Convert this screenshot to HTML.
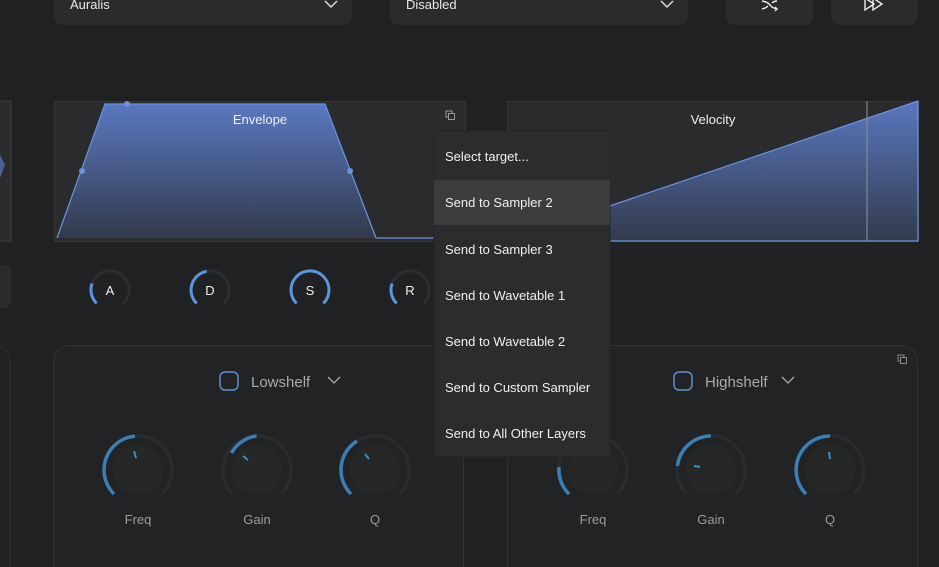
<!DOCTYPE html>
<html><head><meta charset="utf-8"><style>
html,body{margin:0;padding:0;background:#1f2122;width:939px;height:567px;overflow:hidden;font-family:"Liberation Sans",sans-serif}
svg text{font-family:"Liberation Sans",sans-serif}
</style></head><body>
<svg width="939" height="567" viewBox="0 0 939 567" xmlns="http://www.w3.org/2000/svg">
<defs>
<linearGradient id="g" x1="0" y1="0" x2="0" y2="1">
<stop offset="0" stop-color="#5a78c0"/><stop offset="1" stop-color="#323a4c"/></linearGradient>
</defs>
<rect width="939" height="567" fill="#1f2122"/>
<rect x="54" y="-12" width="298" height="37" rx="9" fill="#2a2b2c"/>
<text x="70" y="9" fill="#e8e8e8" font-size="13">Auralis</text>
<path d="M325 1 L331 7 L337 1" stroke="#ddd" stroke-width="1.5" fill="none"/>
<rect x="390" y="-12" width="298" height="37" rx="9" fill="#2a2b2c"/>
<text x="406" y="9" fill="#e8e8e8" font-size="13">Disabled</text>
<path d="M661 1 L667 7 L673 1" stroke="#ddd" stroke-width="1.5" fill="none"/>
<rect x="726" y="-12" width="87" height="37" rx="9" fill="#2a2b2c"/>
<path d="M762 1 Q768 2 770 5 Q772 8 777 9 M762 9 Q766 8 768 6 M772 3 Q774 1 777 1 M775 7 L777 9 L775 11" stroke="#eee" stroke-width="1.4" fill="none"/>
<rect x="831" y="-12" width="87" height="37" rx="9" fill="#2a2b2c"/>
<path d="M865 -2 L865 10 L874 4 Z M873 -2 L873 10 L882 4 L873 -2" stroke="#eee" stroke-width="1.4" fill="none"/>
<rect x="-5" y="101" width="16" height="140" fill="#2a2b2c" stroke="#3a3b3c"/>
<path d="M0 155 L5 165 L0 178 Z" fill="#5a78c0" opacity=".7"/>
<rect x="-10" y="265" width="21" height="43" rx="7" fill="#2a2b2c"/>
<rect x="54.5" y="101.5" width="411" height="140" fill="#2a2b2c" stroke="#353637"/>
<path d="M57 238 L105 104 L325 104 L376 238 Z" fill="url(#g)"/>
<path d="M57 238 L105 104 L325 104 L376 238 L440 238" stroke="#6a93e0" stroke-width="1.2" fill="none"/>
<circle cx="127" cy="104" r="3" fill="#6a93e0"/><circle cx="82" cy="171" r="3" fill="#6a93e0"/><circle cx="350" cy="171" r="3" fill="#6a93e0"/>
<text x="260" y="124" fill="#eee" font-size="13" text-anchor="middle">Envelope</text>
<rect x="446" y="111" width="6" height="6" stroke="#999" fill="none" stroke-width="1"/><rect x="448.5" y="113.5" width="6" height="6" stroke="#999" fill="#2a2b2c" stroke-width="1"/>
<rect x="507.5" y="101.5" width="411" height="140" fill="#2a2b2c" stroke="#353637"/>
<path d="M507 241 L918 101 L918 241 Z" fill="url(#g)"/>
<path d="M507 241 L918 101 L918 241 L507 241" stroke="#6a93e0" stroke-width="1.2" fill="none"/>
<rect x="866" y="101" width="2" height="140" fill="#8a8c90" opacity=".55"/>
<text x="713" y="124" fill="#eee" font-size="13" text-anchor="middle">Velocity</text>
<g fill="none" stroke-width="3">
<g transform="translate(110,290)"><path d="M-13.4 13.4 A19 19 0 1 1 13.4 13.4" stroke="#2b2d2e"/><path d="M-13.4 13.4 A19 19 0 0 1 -17.9 -6.5" stroke="#5b95e0"/></g>
<g transform="translate(210,290)"><path d="M-13.4 13.4 A19 19 0 1 1 13.4 13.4" stroke="#2b2d2e"/><path d="M-13.4 13.4 A19 19 0 0 1 -3.3 -18.7" stroke="#5b95e0"/></g>
<g transform="translate(310,290)"><path d="M-13.4 13.4 A19 19 0 1 1 13.4 13.4" stroke="#5b95e0"/></g>
<g transform="translate(410,290)"><path d="M-13.4 13.4 A19 19 0 1 1 13.4 13.4" stroke="#2b2d2e"/><path d="M-13.4 13.4 A19 19 0 0 1 -17.9 -6.5" stroke="#5b95e0"/></g>
</g>
<g fill="#eee" font-size="13" text-anchor="middle">
<text x="110" y="295">A</text><text x="210" y="295">D</text><text x="310" y="295">S</text><text x="410" y="295">R</text></g>
<rect x="-20" y="345.5" width="30" height="240" rx="16" fill="none" stroke="#303233"/>
<rect x="53.5" y="345.5" width="410" height="240" rx="16" fill="#212324" stroke="#303233"/>
<rect x="507.5" y="345.5" width="410" height="240" rx="16" fill="#212324" stroke="#303233"/>
<rect x="898" y="355" width="6" height="6" stroke="#888" fill="none"/><rect x="900.5" y="357.5" width="6" height="6" stroke="#888" fill="#212324"/>
<rect x="220" y="372" width="18" height="18" rx="5" fill="none" stroke="#5b8fd0" stroke-width="1.5"/>
<text x="251" y="387" fill="#aaa" font-size="15">Lowshelf</text>
<path d="M328 377 L334 383 L340 377" stroke="#aaa" stroke-width="1.3" fill="none"/>
<rect x="674" y="372" width="18" height="18" rx="5" fill="none" stroke="#5b8fd0" stroke-width="1.5"/>
<text x="705" y="387" fill="#aaa" font-size="15">Highshelf</text>
<path d="M782 377 L788 383 L794 377" stroke="#aaa" stroke-width="1.3" fill="none"/>
<g fill="none" stroke-width="3.5">
<g transform="translate(138,470)"><path d="M-24 24 A34 34 0 1 1 24 24" stroke="#292b2c"/><circle r="25" fill="#262828" stroke="none"/><path d="M-24 24 A34 34 0 0 1 -3 -33.9" stroke="#3a7fb5"/><path d="M-4 -19 L-2 -12" stroke="#3a8fc5" stroke-width="2"/></g>
<g transform="translate(257,470)"><path d="M-24 24 A34 34 0 1 1 24 24" stroke="#292b2c"/><circle r="25" fill="#262828" stroke="none"/><path d="M-25.5 -17 A34 34 0 0 1 -0.5 -34" stroke="#3a7fb5"/><path d="M-14 -14 L-9 -10" stroke="#3a8fc5" stroke-width="2"/></g>
<g transform="translate(375,470)"><path d="M-24 24 A34 34 0 1 1 24 24" stroke="#292b2c"/><circle r="25" fill="#262828" stroke="none"/><path d="M-24 24 A34 34 0 0 1 -18 -29" stroke="#3a7fb5"/><path d="M-10 -16 L-6 -11" stroke="#3a8fc5" stroke-width="2"/></g>
<g transform="translate(593,470)"><path d="M-24 24 A34 34 0 1 1 24 24" stroke="#292b2c"/><circle r="25" fill="#262828" stroke="none"/><path d="M-24 24 A34 34 0 0 1 -34 -3" stroke="#3a7fb5"/></g>
<g transform="translate(711,470)"><path d="M-24 24 A34 34 0 1 1 24 24" stroke="#292b2c"/><circle r="25" fill="#262828" stroke="none"/><path d="M-33.5 -4 A34 34 0 0 1 0 -34" stroke="#3a7fb5"/><path d="M-17 -4 L-11 -3" stroke="#3a8fc5" stroke-width="2"/></g>
<g transform="translate(830,470)"><path d="M-24 24 A34 34 0 1 1 24 24" stroke="#292b2c"/><circle r="25" fill="#262828" stroke="none"/><path d="M-24 24 A34 34 0 0 1 0 -34" stroke="#3a7fb5"/><path d="M-1 -18 L0 -11" stroke="#3a8fc5" stroke-width="2"/></g>
</g>
<g fill="#9a9c9d" font-size="13" text-anchor="middle">
<text x="138" y="524">Freq</text><text x="257" y="524">Gain</text><text x="375" y="524">Q</text>
<text x="593" y="524">Freq</text><text x="711" y="524">Gain</text><text x="830" y="524">Q</text></g>
<rect x="434" y="131" width="176" height="326" rx="2" fill="#2b2c2d" stroke="#232425"/>
<rect x="434" y="180" width="176" height="45" fill="#3b3c3d"/>
<g fill="#f0f0f0" font-size="13">
<text x="445" y="161">Select target...</text>
<text x="445" y="207">Send to Sampler 2</text>
<text x="445" y="254">Send to Sampler 3</text>
<text x="445" y="300">Send to Wavetable 1</text>
<text x="445" y="346">Send to Wavetable 2</text>
<text x="445" y="392">Send to Custom Sampler</text>
<text x="445" y="438">Send to All Other Layers</text>
</g>
</svg>
</body></html>
